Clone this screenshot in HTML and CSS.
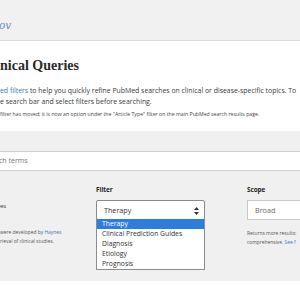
FILE: index.html
```html
<!DOCTYPE html>
<html>
<head>
<meta charset="utf-8">
<link rel="stylesheet" href="styles.css">
</head>
<body>
<header class="top"><span class="logo">ov</span></header>
<section class="intro">
  <h1 class="title">nical Queries</h1>
  <p class="lead"><a class="link">ed filters</a> to help you quickly refine PubMed searches on clinical or disease-specific topics. To<br>e search bar and select filters before searching.</p>
  <p class="note">filter has moved; it is now an option under the "Article Type" filter on the main PubMed search results page.</p>
</section>
<section class="search">
  <div class="input">ch terms</div>
  <div class="filters">
    <div class="col col-cat">
      <div class="cat-name">es</div>
      <p class="desc">were developed by <a class="link">Haynes</a><br>rieval of clinical studies.</p>
    </div>
    <div class="col col-filter">
      <div class="label">Filter</div>
      <div class="select-wrap">
        <div class="select dark">Therapy
          <svg class="arrows" width="5" height="8" viewBox="0 0 5 8"><path d="M2.5 0 L5 3 H0 Z M0 5 H5 L2.5 8 Z" fill="#333"/></svg>
        </div>
        <ul class="menu">
          <li class="on">Therapy</li>
          <li>Clinical Prediction Guides</li>
          <li>Diagnosis</li>
          <li>Etiology</li>
          <li>Prognosis</li>
        </ul>
      </div>
    </div>
    <div class="col col-scope">
      <div class="label">Scope</div>
      <div class="select">Broad</div>
      <p class="desc">Returns more results: <br>comprehensive. <a class="link">See f</a></p>
    </div>
  </div>
</section>
</body>
</html>
```
FILE: styles.css
```css
html, body { margin: 0; padding: 0; }
body {
  width: 300px;
  height: 300px;
  overflow: hidden;
  background: #fff;
  font-family: "Open Sans", "Liberation Sans", sans-serif;
  color: #333;
}
.top {
  height: 41px;
  background: #f1f1f1;
  border-bottom: 1px solid #dcdcdc;
  box-sizing: border-box;
}
.logo {
  display: block;
  padding-top: 19px;
  margin-left: -1px;
  font-family: "DejaVu Serif", serif;
  font-style: italic;
  font-size: 10.5px;
  line-height: 12px;
  color: #6a8db5;
}
.intro { height: 90px; overflow: hidden; }
.title {
  margin: 0;
  padding-top: 15px;
  font-family: "Liberation Serif", serif;
  font-weight: bold;
  font-size: 14px;
  line-height: 20px;
  color: #2b2b2b;
}
.lead {
  margin: 9px 0 0 0;
  font-size: 6.9px;
  line-height: 11px;
  color: #3a3a3a;
  white-space: nowrap;
}
.link { color: #3b78b8; }
.note {
  margin: 3px 0 0 0;
  font-size: 5.2px;
  line-height: 8px;
  color: #444;
  white-space: nowrap;
}
.search {
  background: #f0f0f0;
  height: 150px;
  padding-top: 20px;
  box-sizing: border-box;
}
.input {
  background: #fff;
  border-top: 1px solid #cfcfcf;
  border-bottom: 1px solid #cfcfcf;
  height: 20px;
  box-sizing: border-box;
  font-size: 7px;
  line-height: 18px;
  color: #777;
  margin-left: -1px;
}
.filters {
  display: flex;
  margin-top: 14px;
}
.col { position: relative; flex-shrink: 0; }
.col-cat { width: 96px; padding-top: 14px; }
.col-filter { width: 109px; }
.col-scope { margin-left: 42px; width: 60px; }
.cat-name { font-size: 6px; line-height: 14px; color: #333; }
.desc {
  margin: 15px 0 0 0;
  font-size: 4.9px;
  line-height: 9px;
  color: #555;
  white-space: nowrap;
}
.col-scope .desc { margin-top: 9px; }
.label {
  font-size: 6.3px;
  font-weight: bold;
  line-height: 10px;
  color: #222;
  margin-bottom: 5px;
}
.select-wrap { position: relative; }
.select {
  height: 20px;
  box-sizing: border-box;
  border: 1px solid #c9c9c9;
  background: #fff;
  font-size: 7.2px;
  line-height: 18px;
  padding-left: 7px;
  color: #666;
  position: relative;
}
.select.dark {
  border-color: #8a8a8a;
  border-radius: 2px;
  color: #333;
}
.arrows { position: absolute; right: 5px; top: 6px; }
.menu {
  position: absolute;
  left: 0;
  top: 19px;
  width: 109px;
  box-sizing: border-box;
  margin: 0;
  padding: 0;
  list-style: none;
  background: #fff;
  border: 1px solid #8c8c8c;
  border-top: none;
}
.menu li {
  font-size: 6.8px;
  line-height: 10px;
  height: 10px;
  padding-left: 5px;
  color: #333;
}
.menu li.on { background: #2d7de0; color: #fff; }
```
